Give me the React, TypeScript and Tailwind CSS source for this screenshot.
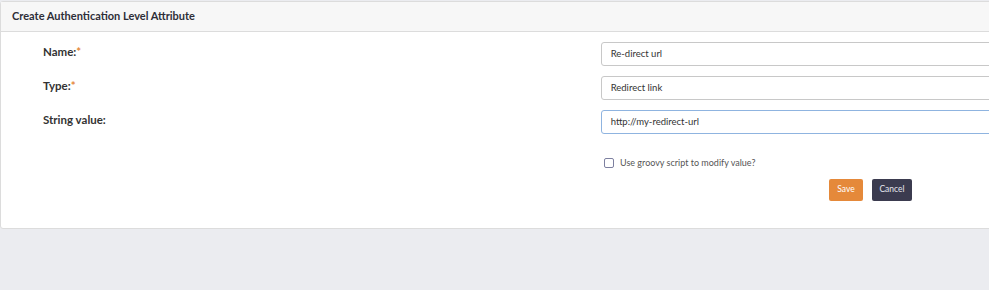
export default function App() {
  return (
    <div
      className="h-[290px] w-[989px] overflow-hidden bg-[#ebecf0]"
      style={{ fontFamily: "Lato, 'Open Sans', sans-serif" }}
    >
      <div className="mt-px h-[228px] w-[1000px] rounded-[3px] border border-[#dcdcdc] bg-white">
        <div className="flex h-[30px] items-center border-b border-[#dcdcdc] bg-[#f7f7f7] pl-[11px]">
          <h2 className="text-[11px] font-bold text-[#2e2e38]">Create Authentication Level Attribute</h2>
        </div>

        <div className="flex flex-col gap-[10px] pt-[10px]">
          <Row label="Name:" required value="Re-direct url" />
          <Row label="Type:" required value="Redirect link" />
          <Row label="String value:" value="http://my-redirect-url" focused />
        </div>

        <div className="mt-[22px] flex items-center gap-[6px] pl-[603px]">
          <span className="h-[10px] w-[10px] rounded-[2px] border border-[#7d80a0] bg-white" />
          <span className="text-[9px] text-[#555]">Use groovy script to modify value?</span>
        </div>

        <div className="mt-[9px] flex gap-[9px] pl-[828px]">
          <button className="h-[22px] w-[34px] rounded-[2px] bg-[#e5893a] text-[8.5px] text-white">Save</button>
          <button className="h-[22px] w-[40px] rounded-[2px] bg-[#3b3b4f] text-[8.5px] text-[#e6e6ee]">Cancel</button>
        </div>
      </div>
    </div>
  );
}

function Row({
  label,
  value,
  required,
  focused,
}: {
  label: string;
  value: string;
  required?: boolean;
  focused?: boolean;
}) {
  return (
    <div className="flex">
      <div className="w-[602px] pl-[42px] pt-px text-[11.5px] font-bold text-[#333]">
        {label}
        {required && <span className="text-[#e5893a]">*</span>}
      </div>
      <div
        className={`flex h-[24px] w-[400px] items-center rounded-[3px] border bg-white pl-[9px] text-[9.5px] text-[#333] ${
          focused ? "border-[#8fb4e0]" : "border-[#c8c8c8]"
        }`}
      >
        {value}
      </div>
    </div>
  );
}
